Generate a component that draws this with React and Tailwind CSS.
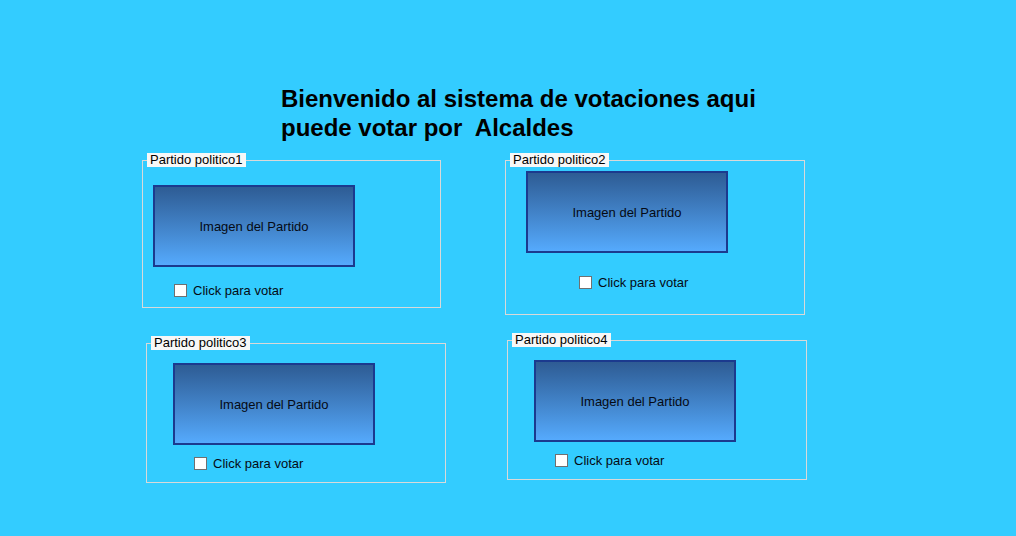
import React from "react";

function GroupBox({ title, boxClass, imgClass, cbClass }) {
  return (
    <div className={"relative flex flex-col border border-[#d9d9d9] " + boxClass}>
      <span className="absolute -top-[8px] left-[4px] h-[14px] bg-[#f7f7f7] px-[3px] text-[13px] leading-[14px] text-black">
        {title}
      </span>
      <div
        className={
          "flex h-[82px] w-[202px] items-center justify-center border-2 border-[#1b3a8e] bg-gradient-to-b from-[#2e5c94] to-[#55aafd] pt-px text-[13px] text-[#050a14] " +
          imgClass
        }
      >
        Imagen del Partido
      </div>
      <div className={"flex h-[13px] items-center gap-[6px] " + cbClass}>
        <span className="box-border block h-[13px] w-[13px] border border-[#707070] bg-white" />
        <span className="text-[13px] leading-none text-[#050a14]">Click para votar</span>
      </div>
    </div>
  );
}

export default function App() {
  return (
    <div
      className="h-[536px] w-[1016px] overflow-hidden bg-[#33ccff]"
      style={{ fontFamily: '"Liberation Sans", Arial, sans-serif' }}
    >
      <div className="pl-[281px] pt-[84px]">
        <h1 className="whitespace-pre text-[24px] font-bold leading-[29px] text-black">
          {"Bienvenido al sistema de votaciones aqui\npuede votar por  Alcaldes"}
        </h1>
      </div>
      <div className="mt-[18px] flex items-start">
        <GroupBox
          title="Partido politico1"
          boxClass="ml-[142px] h-[148px] w-[299px]"
          imgClass="ml-[10px] mt-[24px]"
          cbClass="ml-[31px] mt-[17px]"
        />
        <GroupBox
          title="Partido politico2"
          boxClass="ml-[64px] h-[155px] w-[300px]"
          imgClass="ml-[20px] mt-[10px]"
          cbClass="ml-[73px] mt-[23px]"
        />
      </div>
      <div className="mt-[25px] flex items-start">
        <GroupBox
          title="Partido politico3"
          boxClass="ml-[146px] mt-[3px] h-[140px] w-[300px]"
          imgClass="ml-[26px] mt-[19px]"
          cbClass="ml-[47px] mt-[12px]"
        />
        <GroupBox
          title="Partido politico4"
          boxClass="ml-[61px] h-[140px] w-[300px]"
          imgClass="ml-[26px] mt-[19px]"
          cbClass="ml-[47px] mt-[12px]"
        />
      </div>
    </div>
  );
}
